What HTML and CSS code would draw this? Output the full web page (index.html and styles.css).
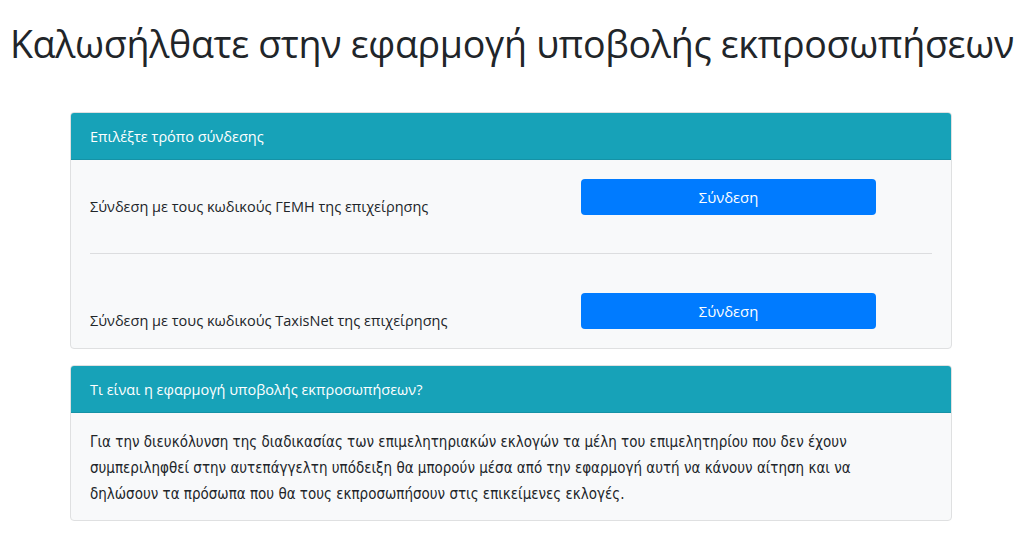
FILE: index.html
```html
<!DOCTYPE html>
<html lang="el">
<head>
<meta charset="utf-8">
<title>Υποβολή εκπροσωπήσεων</title>
<link rel="stylesheet" href="styles.css">
</head>
<body>
<h1 class="title">Καλωσήλθατε στην εφαρμογή υποβολής εκπροσωπήσεων</h1>
<main class="container">
  <section class="card">
    <div class="card-header">Επιλέξτε τρόπο σύνδεσης</div>
    <div class="card-body">
      <div class="login-row">
        <div class="login-text">Σύνδεση με τους κωδικούς ΓΕΜΗ της επιχείρησης</div>
        <button class="btn">Σύνδεση</button>
      </div>
      <hr class="divider">
      <div class="login-row">
        <div class="login-text">Σύνδεση με τους κωδικούς TaxisNet της επιχείρησης</div>
        <button class="btn">Σύνδεση</button>
      </div>
    </div>
  </section>
  <section class="card card-info">
    <div class="card-header">Τι είναι η εφαρμογή υποβολής εκπροσωπήσεων?</div>
    <div class="card-body info-body">
      <p class="info-text">Για την διευκόλυνση της διαδικασίας των επιμελητηριακών εκλογών τα μέλη του επιμελητηρίου που δεν έχουν συμπεριληφθεί στην αυτεπάγγελτη υπόδειξη θα μπορούν μέσα από την εφαρμογή αυτή να κάνουν αίτηση και να δηλώσουν τα πρόσωπα που θα τους εκπροσωπήσουν στις επικείμενες εκλογές.</p>
    </div>
  </section>
</main>
</body>
</html>
```
FILE: styles.css
```css
* { box-sizing: border-box; }
body {
  margin: 0;
  font-family: "Open Sans", "Noto Sans", sans-serif;
  color: #212529;
  background: #fff;
}
.title {
  margin: 20px 0 0;
  height: 92px;
  text-align: center;
  font-size: 37.6px;
  font-weight: 400;
  line-height: 48px;
  letter-spacing: -0.3px;
}
.container {
  width: 882px;
  margin: 0 0 0 70px;
}
.card {
  border: 1px solid #dfe0e1;
  border-radius: 4px;
  background: #f8f9fa;
  overflow: hidden;
}
.card-info { margin-top: 16px; }
.card-header {
  height: 47px;
  background: #17a2b8;
  color: #fff;
  font-size: 14.5px;
  line-height: 47px;
  padding: 0 19px;
  border-bottom: 1px solid #1592a6;
}
.card-body {
  padding: 19px 19px 19px;
}
.login-row {
  display: flex;
  align-items: flex-start;
  height: 36px;
}
.login-text {
  width: 491px;
  padding-top: 16px;
  font-size: 14.5px;
  line-height: 24px;
}
.btn {
  width: 295px;
  height: 36px;
  border: none;
  border-radius: 4px;
  background: #007bff;
  color: #fff;
  font-family: inherit;
  font-size: 14.8px;
  padding: 0;
}
.divider {
  margin: 38px 0 39px;
  border: 0;
  border-top: 1px solid #dcdddf;
}
.info-body {
  padding: 16px 19px 13px;
}
.info-text {
  margin: 0;
  max-width: 800px;
  font-family: "Liberation Sans Narrow", "DejaVu Sans Condensed", "Roboto", sans-serif;
  font-size: 15px;
  line-height: 26px;
}
```
